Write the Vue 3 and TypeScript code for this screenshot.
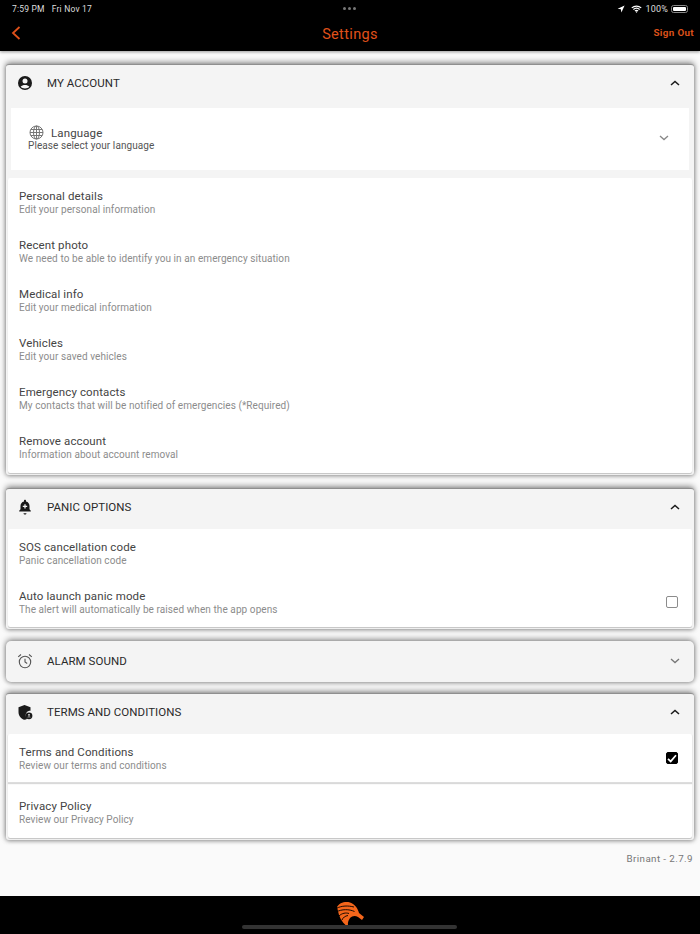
<template>
  <div class="page">
    <header class="topbar">
      <div class="status">
        <span class="time">7:59 PM</span>
        <span class="date">Fri Nov 17</span>
        <span class="dots"><i></i><i></i><i></i></span>
        <span class="status-right">
          <svg class="arrow" width="8" height="8" viewBox="0 0 10 10"><path d="M9.500 .5 .8 4.600l4 .6.7 4.200z" fill="#fff" /></svg>
          <svg width="11" height="8" viewBox="0 0 14 10" fill="none" stroke="#fff" stroke-width="1.600"><path d="M1 3.600c3.400-3 8.600-3 12 0M3 5.600c2.300-2 5.700-2 8 0M5 7.400c1.200-.9 2.800-.9 4 0" /><circle cx="7" cy="8.800" r=".5" fill="#fff" stroke-width=".8" /></svg>
          <span class="pct">100%</span>
          <span class="battery"><b></b></span>
        </span>
      </div>
      <div class="navbar">
        <svg class="back" width="10" height="14" viewBox="0 0 10 14" fill="none" stroke="#e0511a" stroke-width="1.800"><path d="M8.500 1 2 7l6.500 6" /></svg>
        <h1>Settings</h1>
        <span class="signout">Sign Out</span>
      </div>
    </header>

    <main class="content">
      <section class="card">
        <div class="card-head">
          <svg class="head-icon" width="16" height="16" viewBox="0 0 16 16"><circle cx="8" cy="8" r="7" fill="#1a1a1a" /><circle cx="8" cy="6" r="2.500" fill="#f4f4f4" /><path d="M3.600 11.800c2-2.300 6.800-2.300 8.800 0-1 .9-2.600 1.600-4.400 1.600s-3.400-.7-4.400-1.600z" fill="#f4f4f4" /></svg>
          <span class="head-title">MY ACCOUNT</span>
          <svg class="chev" width="10" height="6" viewBox="0 0 10 6" fill="none" stroke="#1a1a1a" stroke-width="1.500"><path d="M1 5l4-3.600L9 5" /></svg>
        </div>
        <div class="language">
          <div class="language-text">
            <div class="language-title">
              <svg width="15" height="15" viewBox="0 0 15 15" fill="none" stroke="#777" stroke-width="1"><circle cx="7.500" cy="7.500" r="6.500" /><ellipse cx="7.500" cy="7.500" rx="3" ry="6.500" /><path d="M1 7.500h13M1.800 4.500h11.400M1.800 10.500h11.400M7.500 1v13" /></svg>
              <span>Language</span>
            </div>
            <div class="language-sub">Please select your language</div>
          </div>
          <svg class="chev" width="10" height="6" viewBox="0 0 10 6" fill="none" stroke="#888" stroke-width="1.300"><path d="M1 1l4 3.600L9 1" /></svg>
        </div>
        <div class="list account-list">
          <div v-for="row in accountRows" :key="row.title" class="row">
            <div class="row-title">{{ row.title }}</div>
            <div class="row-sub">{{ row.sub }}</div>
          </div>
        </div>
      </section>

      <section class="card">
        <div class="card-head">
          <svg class="head-icon" width="16" height="16" viewBox="0 0 16 16"><path d="M8 .8c.6 0 1 .4 1 1v.6c2.300.5 3.500 2.300 3.500 4.600v3.200l1.300 1.500v.8H2.200v-.8l1.300-1.500V7c0-2.300 1.200-4.100 3.500-4.600v-.6c0-.6.4-1 1-1z" fill="#1a1a1a" /><path d="M6.500 14.200h3c0 .9-.7 1.300-1.500 1.300s-1.500-.4-1.500-1.300z" fill="#1a1a1a" /><path d="M8 5.200v4.400M5.800 7.400h4.400" stroke="#f4f4f4" stroke-width="1.300" /></svg>
          <span class="head-title">PANIC OPTIONS</span>
          <svg class="chev" width="10" height="6" viewBox="0 0 10 6" fill="none" stroke="#1a1a1a" stroke-width="1.500"><path d="M1 5l4-3.600L9 5" /></svg>
        </div>
        <div class="list">
          <div class="row">
            <div class="row-title">SOS cancellation code</div>
            <div class="row-sub">Panic cancellation code</div>
          </div>
          <div class="row with-box">
            <div>
              <div class="row-title">Auto launch panic mode</div>
              <div class="row-sub">The alert will automatically be raised when the app opens</div>
            </div>
            <span class="box"></span>
          </div>
        </div>
      </section>

      <section class="card closed">
        <div class="card-head">
          <svg class="head-icon" width="16" height="16" viewBox="0 0 16 16" fill="none" stroke="#555" stroke-width="1.100"><circle cx="8" cy="9" r="5.700" /><path d="M8 5.800V9l2.200 1.500M1.200 3.800 4 1.500M14.800 3.800 12 1.500" /></svg>
          <span class="head-title">ALARM SOUND</span>
          <svg class="chev" width="10" height="6" viewBox="0 0 10 6" fill="none" stroke="#777" stroke-width="1.300"><path d="M1 1l4 3.600L9 1" /></svg>
        </div>
      </section>

      <section class="card">
        <div class="card-head">
          <svg class="head-icon" width="16" height="16" viewBox="0 0 16 16"><path d="M7.500 1 13.500 3.200v3.500c-2.800-.3-5 1.900-4.700 5 .1 1.200.7 2.300 1.500 3C9.300 15.300 8.400 15.600 7.500 15.800 4.200 15 1.500 11.800 1.500 8V3.200z" fill="#1a1a1a" /><circle cx="12" cy="11.800" r="3.400" fill="#1a1a1a" /><circle cx="12" cy="10.800" r=".9" fill="#f4f4f4" /><path d="M10.200 13.300c.7-1 2.900-1 3.600 0z" fill="#f4f4f4" /></svg>
          <span class="head-title">TERMS AND CONDITIONS</span>
          <svg class="chev" width="10" height="6" viewBox="0 0 10 6" fill="none" stroke="#1a1a1a" stroke-width="1.500"><path d="M1 5l4-3.600L9 5" /></svg>
        </div>
        <div class="list">
          <div class="row with-box terms">
            <div>
              <div class="row-title">Terms and Conditions</div>
              <div class="row-sub">Review our terms and conditions</div>
            </div>
            <span class="box checked">
              <svg width="10" height="9" viewBox="0 0 10 9" fill="none" stroke="#fff" stroke-width="1.700"><path d="M1 4.800 3.700 7.400 9 1.200" /></svg>
            </span>
          </div>
          <div class="row privacy">
            <div class="row-title">Privacy Policy</div>
            <div class="row-sub">Review our Privacy Policy</div>
          </div>
        </div>
      </section>

      <p class="version">Brinant - 2.7.9</p>
    </main>

    <footer class="footer">
      <svg class="logo" width="28" height="28" viewBox="0 0 28 28">
        <path d="M1 6C3 2 9 0 14 1.500 19 3 22 8 23 12l5 4-2 3-4-3c-3-2-6-1-8 1-2 3-3 6-1 10-4-3-8-7-10-13z" fill="#f4661b" />
        <path d="M0 7.500C6 4.500 12 4.500 18 6M0 11C6 8 13 8 18.500 10.500M3 15c3-3 7-3.500 10-2.500M6 19c1-2.500 3-4 6-4.500" fill="none" stroke="#000" stroke-width=".9" />
      </svg>
      <span class="home"></span>
    </footer>
  </div>
</template>

<script setup lang="ts">
const accountRows = [
  { title: 'Personal details', sub: 'Edit your personal information' },
  { title: 'Recent photo', sub: 'We need to be able to identify you in an emergency situation' },
  { title: 'Medical info', sub: 'Edit your medical information' },
  { title: 'Vehicles', sub: 'Edit your saved vehicles' },
  { title: 'Emergency contacts', sub: 'My contacts that will be notified of emergencies (*Required)' },
  { title: 'Remove account', sub: 'Information about account removal' },
]
</script>

<style scoped>
.page { height: 934px; display: flex; flex-direction: column; background: #fafafa; font-family: Roboto, "Liberation Sans", sans-serif; overflow: hidden; }
.topbar { background: #000; height: 51px; flex: none; box-shadow: 0 1px 3px rgba(0, 0, 0, 0.4); position: relative; z-index: 2; }
.status { position: relative; height: 17px; display: flex; align-items: center; padding: 0 12px; gap: 7px; color: #ddd; font-size: 8.500px; letter-spacing: 0.2px; }
.dots { position: absolute; left: 343px; top: 7px; display: flex; gap: 2px; }
.dots i { width: 3px; height: 3px; border-radius: 50%; background: #777; }
.status-right { margin-left: auto; display: flex; align-items: center; gap: 4px; margin-right: -1px; }
.arrow { margin-right: 2px; }
.pct { font-size: 9px; margin-left: -1px; margin-right: -1px; }
.battery { width: 17px; height: 8px; border: 1px solid #888; border-radius: 2.500px; padding: 1px; margin-right: 1px; box-sizing: border-box; display: flex; }
.battery b { flex: 1; background: #fff; border-radius: 1px; }
.navbar { position: relative; height: 34px; display: flex; align-items: center; justify-content: center; }
.back { position: absolute; left: 11px; top: 9px; }
.navbar h1 { margin: 0; color: #e0511a; font-size: 14.500px; font-weight: 400; letter-spacing: 0.35px; }
.signout { position: absolute; right: 6px; top: 10px; color: #d9501a; font-size: 9.800px; font-weight: 700; letter-spacing: 0.35px; }

.content { flex: 1; padding: 13px 6px 0; display: flex; flex-direction: column; gap: 13px; min-height: 0; }
.card { background: #f4f4f4; border-radius: 3px; border-top: 1px solid #8f8f8f; box-shadow: 0 -2px 6px rgba(0, 0, 0, 0.38), 0 1px 4px rgba(0, 0, 0, 0.35); padding-bottom: 2px; }
.card.closed { border-top: 0; border-radius: 5px; padding-bottom: 0; margin-top: -1px; margin-bottom: -2px; }
.card-head { height: 40px; padding: 0 14px 4px 11px; box-sizing: border-box; display: flex; align-items: center; }
.closed .card-head { height: 41px; padding-bottom: 1px; }
.head-icon { flex: none; width: 16px; height: 16px; }
.head-title { margin-left: 14px; font-size: 11.500px; color: #2a2a2a; letter-spacing: 0.05px; }
.chev { margin-left: auto; flex: none; }
.language { margin: 3px 5px 8px; height: 62px; padding: 0 20px 2px 17px; background: #fff; display: flex; align-items: center; box-sizing: border-box; }
.language-title { display: flex; align-items: center; gap: 7px; font-size: 11.500px; color: #444; letter-spacing: 0.12px; margin-left: 1px; }
.language-sub { font-size: 10px; color: #555; letter-spacing: 0.08px; margin-top: 0; }
.list { margin: 0 2px; background: #fff; border-radius: 2px; box-shadow: 0 1px 1px rgba(0, 0, 0, 0.2); }
.row { height: 49px; padding: 11px 11px 0; box-sizing: border-box; }
.account-list { padding-bottom: 1px; }
.row-title { font-size: 11.500px; line-height: 14px; color: #444; letter-spacing: 0.12px; }
.row-sub { font-size: 10px; line-height: 13px; color: #8c8c8c; letter-spacing: 0.08px; }
.with-box { display: flex; justify-content: space-between; align-items: flex-start; }
.box { width: 12px; height: 12px; margin: 7px 3px 0 0; border: 1px solid #8c8c8c; border-radius: 2px; flex: none; box-sizing: border-box; }
.box.checked { background: #000; border-color: #000; display: flex; align-items: center; justify-content: center; }
.terms { border-bottom: 1px solid #ddd; box-shadow: 0 1px 1px rgba(0, 0, 0, 0.15); }
.privacy { margin-top: 4px; height: 51px; padding-top: 12px; }
.version { margin: 0 1px 0 0; text-align: right; font-size: 9.800px; color: #777; letter-spacing: 0.4px; }

.footer { height: 38px; flex: none; background: #000; position: relative; }
.logo { position: absolute; left: 336px; top: 5px; }
.home { position: absolute; left: 242px; top: 29px; width: 215px; height: 4px; border-radius: 2px; background: #333; }
</style>

<style>
html, body { margin: 0; background: #fafafa; }
</style>
